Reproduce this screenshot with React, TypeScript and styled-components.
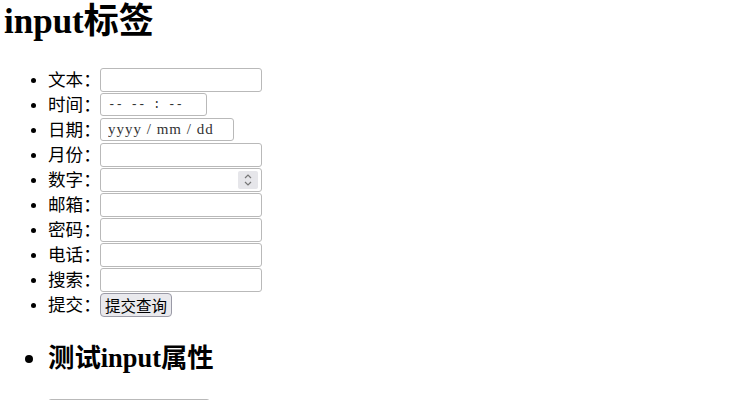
import styled, { createGlobalStyle } from 'styled-components'

const GlobalStyle = createGlobalStyle`
  body {
    margin: 0;
    background: #fff;
    color: #000;
    font-family: "Liberation Serif", "Noto Sans CJK SC", serif;
  }
`

const Page = styled.div`
  padding: 0 8px 0 4px;
`

const Title = styled.h1`
  font-size: 35px;
  line-height: 40px;
  font-weight: bold;
  margin: 2px 0 25px;
`

const List = styled.ul`
  margin: 0;
  padding-left: 44px;
`

const Item = styled.li`
  font-size: 17.6px;
  line-height: 25px;
  height: 25px;
`

const Row = styled.span`
  display: inline-flex;
  align-items: center;
  height: 25px;
  vertical-align: top;
`

const Label = styled.span`
  width: 52px;
  line-height: 20px;
  padding-top: 1px;
  white-space: nowrap;
`

const HeadItem = styled.li`
  font-size: 26.4px;
  margin-top: 26px;
`

const SubTitle = styled.h2`
  font-size: 26.4px;
  line-height: 30px;
  font-weight: bold;
  margin: 0 0 18px;
`

const Field = styled.input<{ $w?: number; $h?: number; $mono?: boolean }>`
  box-sizing: border-box;
  width: ${p => p.$w ?? 162}px;
  height: ${p => p.$h ?? 24}px;
  margin: 0;
  padding: 0 7px;
  border: 1px solid #b9b9b9;
  border-radius: 3px;
  background: #fff;
  font-family: ${p => (p.$mono ? '"Liberation Mono", monospace' : '"Liberation Serif", serif')};
  font-size: ${p => (p.$mono ? 12.5 : 15)}px;
  letter-spacing: ${p => (p.$mono ? 0 : 1)}px;
  color: #222;
  outline: none;
  &::placeholder {
    color: #333;
    opacity: 1;
  }
`

const SpinWrap = styled.span`
  position: relative;
  display: inline-flex;
`

const Spinner = styled.span`
  position: absolute;
  right: 4px;
  top: 3px;
  width: 20px;
  height: 18px;
  background: #e6e6ea;
  border-radius: 2px;
  display: flex;
  align-items: center;
  justify-content: center;
`

const Button = styled.button`
  box-sizing: border-box;
  height: 24px;
  width: 72px;
  padding: 0;
  margin: 0;
  border: 1px solid #9a9aa6;
  border-radius: 4px;
  background: #e9e9ed;
  font-family: "Noto Sans CJK SC", sans-serif;
  font-size: 15.5px;
  line-height: 20px;
  color: #000;
`

const rows: { label: string; w?: number; h?: number; ph?: string; mono?: boolean }[] = [
  { label: '文本：' },
  { label: '时间：', w: 107, h: 23, ph: '-- -- : --', mono: true },
  { label: '日期：', w: 134, h: 23, ph: 'yyyy / mm / dd' },
  { label: '月份：' },
]

const rest = ['邮箱：', '密码：', '电话：', '搜索：']

const App = () => {
  return (
    <Page>
      <GlobalStyle />
      <Title>input标签</Title>
      <List>
        {rows.map(r => (
          <Item key={r.label}>
            <Row>
              <Label>{r.label}</Label>
              <Field $w={r.w} $h={r.h} $mono={r.mono} placeholder={r.ph} />
            </Row>
          </Item>
        ))}
        <Item>
          <Row>
            <Label>数字：</Label>
            <SpinWrap>
              <Field />
              <Spinner>
                <svg width="10" height="14" viewBox="0 0 10 14" fill="none" stroke="#777" strokeWidth="1.2">
                  <path d="M2 5 L5 2 L8 5" />
                  <path d="M2 9 L5 12 L8 9" />
                </svg>
              </Spinner>
            </SpinWrap>
          </Row>
        </Item>
        {rest.map(label => (
          <Item key={label}>
            <Row>
              <Label>{label}</Label>
              <Field />
            </Row>
          </Item>
        ))}
        <Item>
          <Row>
            <Label>提交：</Label>
            <Button>提交查询</Button>
          </Row>
        </Item>
        <HeadItem>
          <SubTitle>测试input属性</SubTitle>
          <Field />
        </HeadItem>
      </List>
    </Page>
  )
}

export default App
